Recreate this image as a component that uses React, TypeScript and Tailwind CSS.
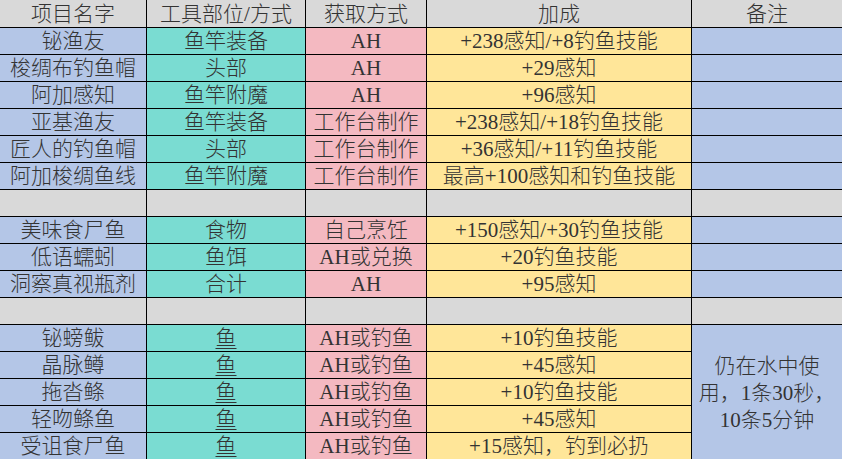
import React from "react";

type Row = [string, string, string, string] | null;

const rows: Row[] = [
  ["铋渔友", "鱼竿装备", "AH", "+238感知/+8钓鱼技能"],
  ["梭绸布钓鱼帽", "头部", "AH", "+29感知"],
  ["阿加感知", "鱼竿附魔", "AH", "+96感知"],
  ["亚基渔友", "鱼竿装备", "工作台制作", "+238感知/+18钓鱼技能"],
  ["匠人的钓鱼帽", "头部", "工作台制作", "+36感知/+11钓鱼技能"],
  ["阿加梭绸鱼线", "鱼竿附魔", "工作台制作", "最高+100感知和钓鱼技能"],
  null,
  ["美味食尸鱼", "食物", "自己烹饪", "+150感知/+30钓鱼技能"],
  ["低语蠕蚓", "鱼饵", "AH或兑换", "+20钓鱼技能"],
  ["洞察真视瓶剂", "合计", "AH", "+95感知"],
  null,
];

const fishRows: [string, string, string, string][] = [
  ["铋螃鲅", "鱼", "AH或钓鱼", "+10钓鱼技能"],
  ["晶脉鳟", "鱼", "AH或钓鱼", "+45感知"],
  ["拖沓鲦", "鱼", "AH或钓鱼", "+10钓鱼技能"],
  ["轻吻鲦鱼", "鱼", "AH或钓鱼", "+45感知"],
  ["受诅食尸鱼", "鱼", "AH或钓鱼", "+15感知，钓到必扔"],
];

const cell =
  "h-[27px] flex items-center justify-center pt-[1px] border-r border-b border-black whitespace-nowrap overflow-hidden";

export default function App() {
  return (
    <div
      className="w-[842px] h-[459px] overflow-hidden bg-white text-[#333333] text-[21px] leading-none font-light"
      style={{ fontFamily: '"Liberation Serif", "Noto Sans CJK SC", serif' }}
    >
      <div className="grid grid-cols-[147px_159px_121px_265px_150px]">
        {["项目名字", "工具部位/方式", "获取方式", "加成", "备注"].map((h, i) => (
          <div
            key={h}
            className={`h-[28px] flex items-center justify-center pt-[1px] border-b border-black bg-[#d9d9d9] ${
              i < 4 ? "border-r" : ""
            }`}
          >
            {h}
          </div>
        ))}
        {rows.map((r, idx) =>
          r === null ? (
            <React.Fragment key={idx}>
              <div className={`${cell} bg-[#d9d9d9]`} />
              <div className={`${cell} bg-[#d9d9d9]`} />
              <div className={`${cell} bg-[#d9d9d9]`} />
              <div className={`${cell} bg-[#d9d9d9]`} />
              <div className="h-[27px] border-b border-black bg-[#d9d9d9]" />
            </React.Fragment>
          ) : (
            <React.Fragment key={idx}>
              <div className={`${cell} bg-[#b4c6e7]`}>{r[0]}</div>
              <div className={`${cell} bg-[#7adcd2]`}>{r[1]}</div>
              <div className={`${cell} bg-[#f4b9c1]`}>{r[2]}</div>
              <div className={`${cell} bg-[#ffe699]`}>{r[3]}</div>
              <div className="h-[27px] border-b border-black bg-[#b4c6e7]" />
            </React.Fragment>
          )
        )}
        {fishRows.map((r, idx) => (
          <React.Fragment key={"f" + idx}>
            <div className={`${cell} bg-[#b4c6e7]`}>{r[0]}</div>
            <div className={`${cell} bg-[#7adcd2]`}>
              <span className="underline underline-offset-[3px] decoration-1">{r[1]}</span>
            </div>
            <div className={`${cell} bg-[#f4b9c1]`}>{r[2]}</div>
            <div className={`${cell} bg-[#ffe699]`}>{r[3]}</div>
            {idx === 0 ? (
              <div className="row-span-5 bg-[#b4c6e7] flex flex-col items-center justify-center leading-[27px] pt-[2px]">
                <span>仍在水中使</span>
                <span>用，1条30秒，</span>
                <span>10条5分钟</span>
              </div>
            ) : null}
          </React.Fragment>
        ))}
      </div>
    </div>
  );
}
